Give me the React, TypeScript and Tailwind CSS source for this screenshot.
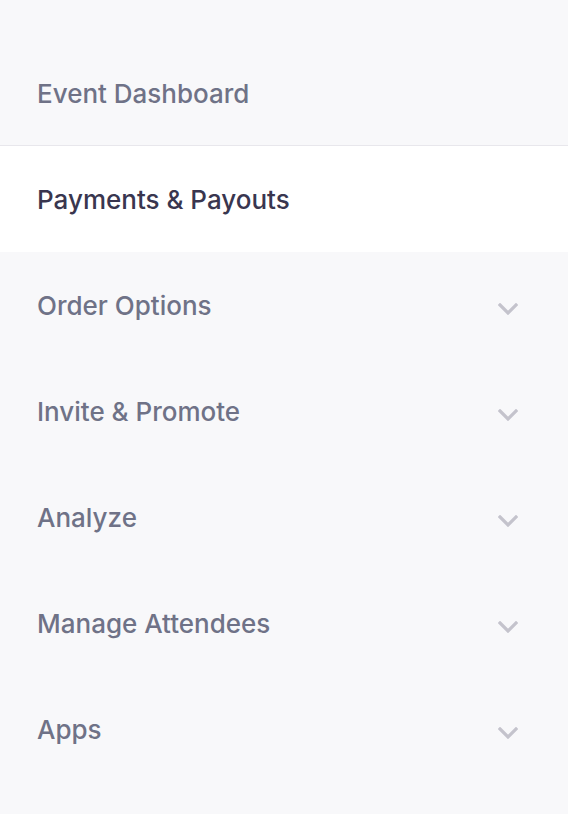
import { ReactNode } from "react";

const Chevron = () => (
  <svg width="20" height="12" viewBox="0 0 20 12" fill="none" className="shrink-0 mt-[8px]">
    <path d="M2 2l8 8 8-8" stroke="#c4c3cc" strokeWidth="3.2" strokeLinecap="square" />
  </svg>
);

function Row({ children, active, expandable, border }: { children: ReactNode; active?: boolean; expandable?: boolean; border?: boolean }) {
  return (
    <div
      className={`h-[106px] flex items-center justify-between pl-[37px] pr-[50px] ${
        active ? "bg-white text-[#39364f]" : "text-[#6f7287]"
      } ${border ? "border-b border-[#e8e7ec]" : ""}`}
    >
      <span className="text-[26px] leading-[32px] font-medium pt-[2px]">{children}</span>
      {expandable && <Chevron />}
    </div>
  );
}

export default function App() {
  return (
    <div className="w-[568px] h-[814px] bg-[#f8f8fa] pt-[40px]" style={{ fontFamily: "Inter, 'Noto Sans', sans-serif" }}>
      <Row border>Event Dashboard</Row>
      <Row active>Payments &amp; Payouts</Row>
      <Row expandable>Order Options</Row>
      <Row expandable>Invite &amp; Promote</Row>
      <Row expandable>Analyze</Row>
      <Row expandable>Manage Attendees</Row>
      <Row expandable>Apps</Row>
    </div>
  );
}
